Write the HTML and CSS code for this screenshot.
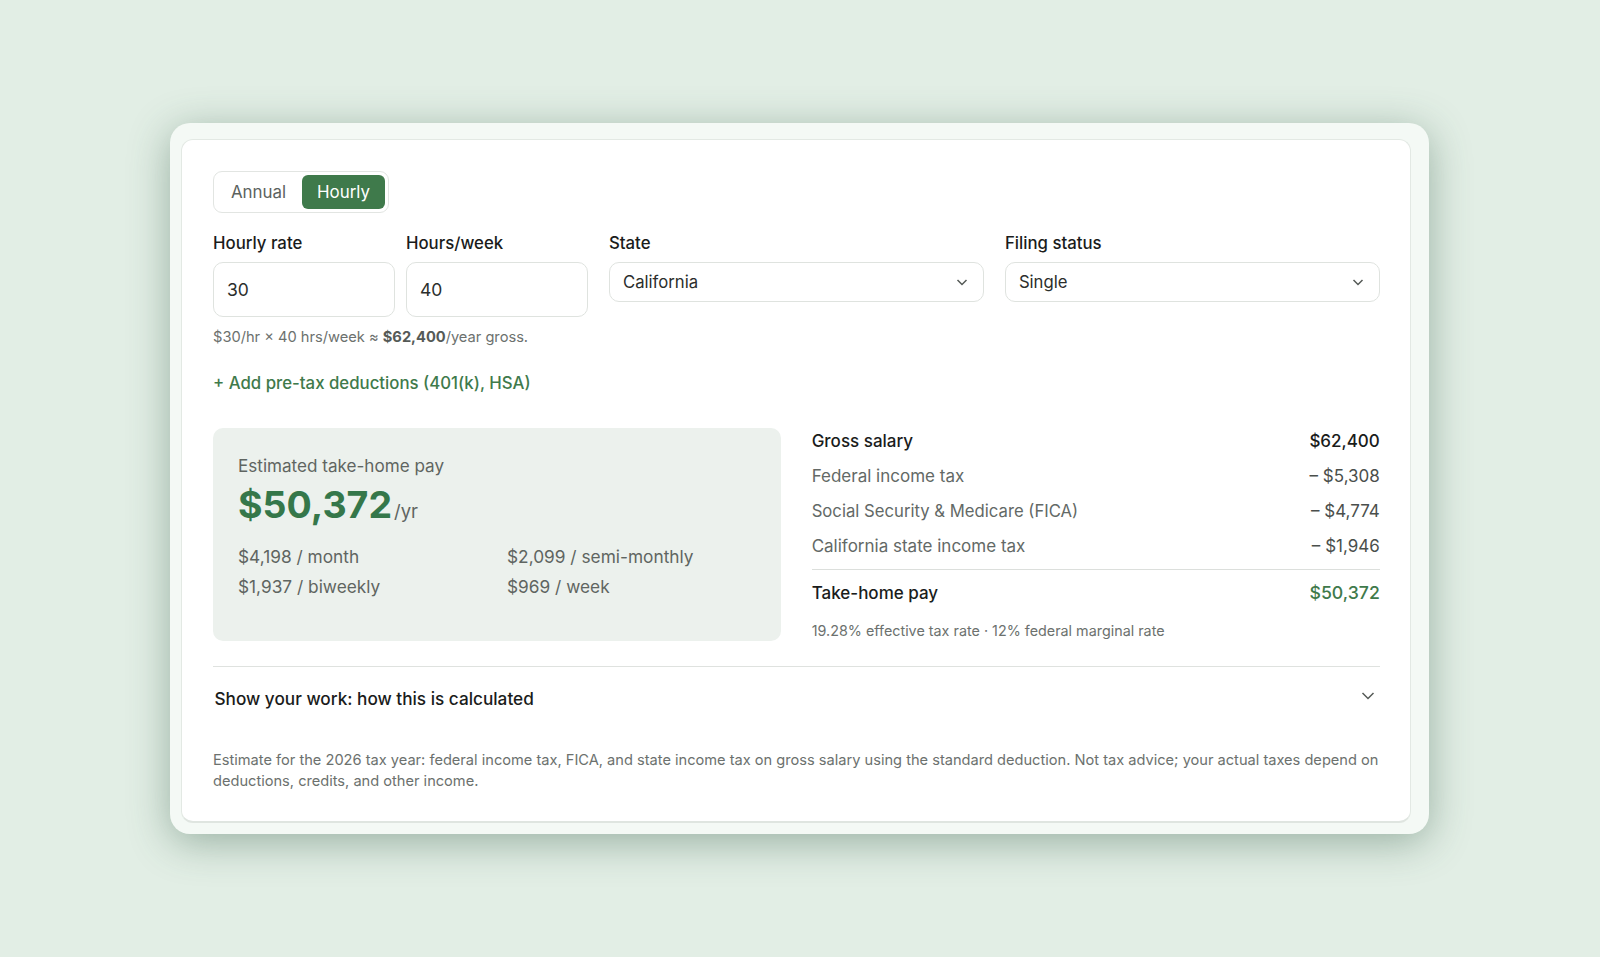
FILE: index.html
```html
<!DOCTYPE html>
<html lang="en">
<head>
<meta charset="utf-8">
<title>Take-home pay calculator</title>
<link rel="stylesheet" href="styles.css">
</head>
<body>
<div class="frame">
  <main class="card">
    <div class="toggle">
      <button class="toggle-btn">Annual</button>
      <button class="toggle-btn active">Hourly</button>
    </div>
    <div class="fields">
      <div class="pair">
        <label class="field"><span class="label">Hourly rate</span><input class="input" value="30"></label>
        <label class="field"><span class="label">Hours/week</span><input class="input" value="40"></label>
      </div>
      <label class="field"><span class="label">State</span>
        <span class="select"><span>California</span>
          <svg class="chev" viewBox="0 0 16 16"><path d="M3.5 6l4.5 4.5L12.500 6"/></svg></span></label>
      <label class="field"><span class="label">Filing status</span>
        <span class="select"><span>Single</span>
          <svg class="chev" viewBox="0 0 16 16"><path d="M3.500 6l4.500 4.500L12.500 6"/></svg></span></label>
    </div>
    <p class="hint">$30/hr × 40 hrs/week ≈ <strong>$62,400</strong>/year gross.</p>
    <a class="add-link">+ Add pre-tax deductions (401(k), HSA)</a>
    <section class="results">
      <div class="summary">
        <div class="summary-title">Estimated take-home pay</div>
        <div class="amount"><span class="big">$50,372</span><span class="per">/yr</span></div>
        <div class="periods">
          <span>$4,198 / month</span><span>$2,099 / semi-monthly</span>
          <span>$1,937 / biweekly</span><span>$969 / week</span>
        </div>
      </div>
      <div class="breakdown">
        <div class="row strong"><span>Gross salary</span><span>$62,400</span></div>
        <div class="row"><span>Federal income tax</span><span class="val">– $5,308</span></div>
        <div class="row"><span class="narrow">Social Security &amp; Medicare (FICA)</span><span class="val">– $4,774</span></div>
        <div class="row"><span>California state income tax</span><span class="val">– $1,946</span></div>
        <div class="row total"><span>Take-home pay</span><span class="green">$50,372</span></div>
        <p class="rate">19.28% effective tax rate · 12% federal marginal rate</p>
      </div>
    </section>
    <div class="work">
      <span>Show your work: how this is calculated</span>
      <svg class="work-chev" viewBox="0 0 16 12"><path d="M2.500 3l5.500 5.500L13.500 3"/></svg>
    </div>
    <p class="foot">Estimate for the 2026 tax year: federal income tax, FICA, and state income tax on gross salary using the standard deduction. Not tax advice; your actual taxes depend on deductions, credits, and other income.</p>
  </main>
</div>
</body>
</html>
```
FILE: styles.css
```css
* { box-sizing: border-box; }
html, body { height: 100%; }
body {
  margin: 0;
  padding: 0 2px 1px 0;
  display: flex;
  align-items: center;
  justify-content: center;
  background: #e2eee5;
  font-family: Inter, "Liberation Sans", sans-serif;
  color: #111;
}
.frame {
  width: 1259px;
  height: 711px;
  padding: 16px 18px 11px 11.500px;
  background: #f4f9f5;
  border-radius: 20px;
  box-shadow: 0 8px 40px rgba(50, 90, 70, 0.42);
}
.card {
  height: 684px;
  padding: 31px 29.700px 0 31px;
  background: #fff;
  border: 1px solid #e3e9e4;
  border-bottom: 2px solid #dfe5e0;
  border-radius: 12px;
}
.toggle {
  display: inline-flex;
  height: 42px;
  width: 176px;
  padding: 3px;
  gap: 4px;
  background: #fff;
  border: 1px solid #e2e5e2;
  border-radius: 9px;
  vertical-align: top;
}
.toggle-btn {
  flex: 1;
  border: 0;
  padding: 0 0 0 2px;
  background: transparent;
  font: 400 16.900px Inter, sans-serif;
  color: #5c625e;
  border-radius: 6px;
}
.toggle-btn.active {
  flex: none;
  width: 83px;
  padding: 0;
  background: #3f7a4b;
  color: #fff;
}
.fields {
  display: grid;
  grid-template-columns: repeat(3, 1fr);
  gap: 21px;
  margin-top: 20px;
  align-items: start;
}
.pair {
  display: grid;
  grid-template-columns: 1fr 1fr;
  gap: 11px;
}
.field { display: block; }
.label {
  display: block;
  height: 20px;
  margin-bottom: 9px;
  font-size: 16.800px;
  line-height: 20px;
  font-weight: 450;
  color: #1a1c1b;
}
.input {
  display: block;
  width: 100%;
  height: 55px;
  padding: 0 13px;
  border: 1px solid #dfe3df;
  border-radius: 10px;
  background: #fff;
  font: 400 17.500px Inter, sans-serif;
  color: #2b2e2c;
  outline: 0;
}
.select {
  position: relative;
  display: flex;
  align-items: center;
  height: 40px;
  padding: 0 13px;
  border: 1px solid #dfe3df;
  border-radius: 10px;
  font-size: 16.700px;
  color: #2b2e2c;
}
.chev {
  position: absolute;
  right: 13px;
  top: 11px;
  width: 16px;
  height: 16px;
  fill: none;
  stroke: #555a57;
  stroke-width: 1.500;
}
.hint {
  margin: 10px 0 0;
  font-size: 14.650px;
  line-height: 20px;
  color: #6c716e;
}
.hint strong { font-weight: 700; color: #555a57; }
.add-link {
  display: block;
  margin-top: 26px;
  font-size: 16.800px;
  line-height: 20px;
  font-weight: 450;
  color: #3f7a4b;
}
.results {
  display: grid;
  grid-template-columns: 1fr 1fr;
  grid-template-rows: 213px;
  gap: 30.500px;
  margin-top: 35px;
  height: 213px;
}
.summary {
  padding: 27.500px 25px 0;
  background: #ecf1ed;
  border-radius: 10px;
}
.summary-title {
  font-size: 17.100px;
  line-height: 22px;
  color: #5f6561;
}
.amount {
  display: flex;
  align-items: baseline;
  height: 46px;
  margin-top: 5px;
  line-height: 46px;
}
.big {
  font-size: 37.500px;
  font-weight: 700;
  color: #35774a;
}
.per { font-size: 18.500px; color: #5f6561; margin-left: 2px; }
.periods {
  display: grid;
  grid-template-columns: 269px 1fr;
  row-gap: 8px;
  margin-top: 17.500px;
  font-size: 17.300px;
  line-height: 22px;
  color: #5f6561;
}
.breakdown { padding-top: 2px; }
.row {
  display: flex;
  justify-content: space-between;
  height: 35.300px;
  font-size: 17px;
  line-height: 22px;
  color: #636966;
}
.row .val { color: #4a4f4c; }
.row .narrow { font-size: 16.700px; }
.row.strong { color: #1a1c1b; font-weight: 450; }
.row.total {
  height: 41px;
  margin-top: -2px;
  padding-top: 12px;
  border-top: 1px solid #dcdfdc;
  color: #1a1c1b;
  font-weight: 450;
  line-height: 22px;
}
.green { color: #3f7a4b; font-size: 17.700px; }
.rate {
  margin: 11px 0 0;
  font-size: 14.350px;
  line-height: 20px;
  color: #6c716e;
}
.work {
  display: flex;
  justify-content: space-between;
  align-items: flex-start;
  height: 65px;
  margin-top: 25px;
  padding: 22px 4px 0 1.500px;
  border-top: 1px solid #dfe2df;
  font-size: 17.200px;
  line-height: 20px;
  font-weight: 450;
  color: #1a1c1b;
}
.work-chev {
  width: 16px;
  height: 12px;
  margin-top: 1.500px;
  fill: none;
  stroke: #555a57;
  stroke-width: 1.500;
}
.foot {
  margin: 19.500px 0 0;
  font-size: 14.620px;
  line-height: 20.500px;
  color: #6c716e;
}
```
